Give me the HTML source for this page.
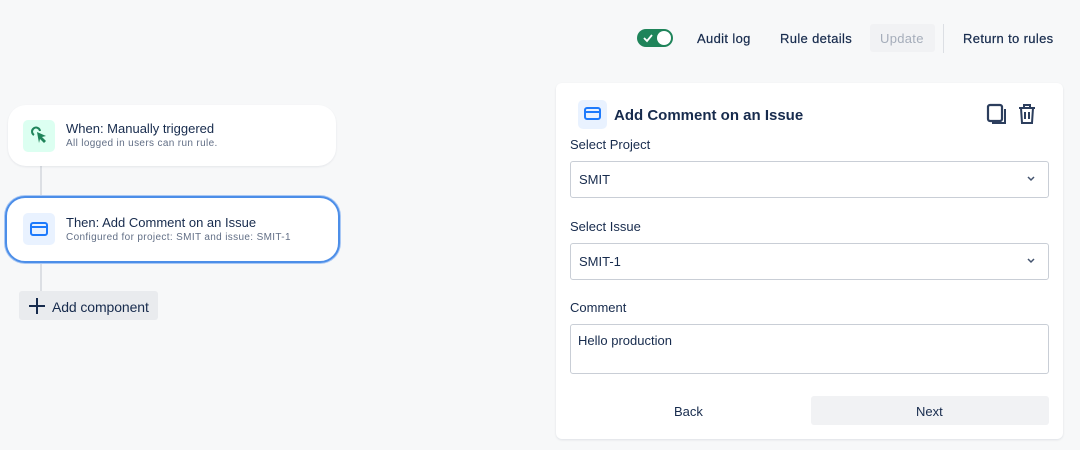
<!DOCTYPE html>
<html><head><style>
*{box-sizing:border-box;margin:0;padding:0}
body{width:1080px;height:450px;background:#f7f8f9;font-family:"Liberation Sans",sans-serif;color:#172b4d;position:relative;overflow:hidden}
.a{position:absolute}
.card{background:#fff;border-radius:18px;box-shadow:0 1px 2px rgba(9,30,66,.08)}
.t1{font-size:13px;color:#172b4d}
.nav{font-size:13px;color:#172b4d;letter-spacing:0.35px;-webkit-text-stroke:0.2px #172b4d}
.t2{font-size:10px;color:#626f86;letter-spacing:0.35px}
.lbl{font-size:13px;color:#172b4d}
.sel{background:#fff;border:1px solid #c9ced6;border-radius:3px;font-size:13px;padding-left:8px;display:flex;align-items:center}
</style></head><body>
<div class="a" style="left:637px;top:29px;width:36px;height:18px;border-radius:9px;background:#1f845a"></div>
<div class="a" style="left:657px;top:31px;width:14px;height:14px;border-radius:50%;background:#fff"></div>
<svg class="a" style="left:642px;top:32px" width="12" height="12" viewBox="0 0 12 12"><path d="M2 6l3 3 5-6" stroke="#fff" stroke-width="1.8" fill="none"/></svg>
<div class="a nav" style="left:697px;top:31px">Audit log</div>
<div class="a nav" style="left:780px;top:31px">Rule details</div>
<div class="a" style="left:870px;top:24px;width:65px;height:28px;background:#f1f2f4;border-radius:3px"></div>
<div class="a t1" style="left:880px;top:31px;color:#a5adba;letter-spacing:0.3px">Update</div>
<div class="a" style="left:943px;top:24px;width:1px;height:29px;background:#dcdfe4"></div>
<div class="a nav" style="left:963px;top:31px">Return to rules</div>
<div class="a" style="left:40px;top:165px;width:2px;height:130px;background:#dcdfe4"></div>
<div class="card a" style="left:8px;top:105px;width:328px;height:61px"></div>
<div class="a" style="left:23px;top:120px;width:32px;height:32px;border-radius:5px;background:#dcfff1"></div>
<svg class="a" style="left:28px;top:124px" width="22" height="22" viewBox="0 0 22 22"><path d="M6 11a4 4 0 1 1 6-4" stroke="#1f845a" stroke-width="2" fill="none"/><path d="M9 8l9 4-4 1 4 4-2 2-4-4-1 4z" fill="#1f845a"/></svg>
<div class="a t1" style="left:66px;top:121px">When: Manually triggered</div>
<div class="a t2" style="left:66px;top:138px">All logged in users can run rule.</div>
<div class="a" style="left:5px;top:196px;width:335px;height:67px;border-radius:20px;border:2px solid #4c8ee8;box-shadow:0 0 0 1px #a9c8f5;background:#fff"></div>
<div class="a" style="left:23px;top:213px;width:32px;height:32px;border-radius:5px;background:#e9f2ff"></div>
<svg class="a" style="left:29px;top:221px" width="20" height="16" viewBox="0 0 20 16"><rect x="2" y="2" width="16" height="12" rx="2" stroke="#1d7afc" stroke-width="2" fill="none"/><path d="M2 6h16" stroke="#1d7afc" stroke-width="2"/></svg>
<div class="a t1" style="left:66px;top:215px">Then: Add Comment on an Issue</div>
<div class="a t2" style="left:66px;top:232px">Configured for project: SMIT and issue: SMIT-1</div>
<div class="a" style="left:19px;top:291px;width:139px;height:29px;background:#e9ebee;border-radius:3px"></div>
<svg class="a" style="left:28px;top:297px" width="18" height="18" viewBox="0 0 18 18"><path d="M9 1v16M1 9h16" stroke="#172b4d" stroke-width="2"/></svg>
<div class="a" style="left:52px;top:299px;font-size:14px;letter-spacing:-0.1px">Add component</div>
<div class="a" style="left:556px;top:83px;width:507px;height:356px;background:#fff;border-radius:6px;box-shadow:0 1px 2px rgba(9,30,66,.1)"></div>
<div class="a" style="left:578px;top:100px;width:29px;height:29px;border-radius:5px;background:#e9f2ff"></div>
<svg class="a" style="left:583px;top:106px" width="20" height="16" viewBox="0 0 20 16"><rect x="2" y="2" width="15" height="11" rx="2" stroke="#1d7afc" stroke-width="2" fill="none"/><path d="M2 6h15" stroke="#1d7afc" stroke-width="2"/></svg>
<div class="a" style="left:614px;top:107px;font-size:15px;font-weight:bold">Add Comment on an Issue</div>
<svg class="a" style="left:985px;top:103px" width="22" height="22" viewBox="0 0 22 22"><rect x="3" y="2" width="14" height="16" rx="2" stroke="#2c3e5d" stroke-width="2.2" fill="none"/><path d="M20 6v14H7" stroke="#2c3e5d" stroke-width="2" fill="none"/></svg>
<svg class="a" style="left:1016px;top:103px" width="22" height="22" viewBox="0 0 22 22"><path d="M3 5h16M8 5V2h6v3M5 5l1 15h10l1-15M9 9v7M13 9v7" stroke="#2c3e5d" stroke-width="2" fill="none"/></svg>
<div class="a lbl" style="left:570px;top:137px">Select Project</div>
<div class="a sel" style="left:570px;top:161px;width:479px;height:37px">SMIT</div>
<div class="a lbl" style="left:570px;top:219px">Select Issue</div>
<div class="a sel" style="left:570px;top:243px;width:479px;height:37px">SMIT-1</div>
<svg class="a" style="left:1026px;top:175px" width="10" height="8"><path d="M2 2l3 3 3-3" stroke="#44546f" stroke-width="1.5" fill="none"/></svg>
<svg class="a" style="left:1026px;top:257px" width="10" height="8"><path d="M2 2l3 3 3-3" stroke="#44546f" stroke-width="1.5" fill="none"/></svg>
<div class="a lbl" style="left:570px;top:300px">Comment</div>
<div class="a sel" style="left:570px;top:324px;width:479px;height:50px;align-items:flex-start;padding-top:8px;padding-left:7px">Hello production</div>
<div class="a t1" style="left:674px;top:404px">Back</div>
<div class="a" style="left:811px;top:396px;width:238px;height:29px;background:#f1f2f4;border-radius:3px"></div>
<div class="a t1" style="left:916px;top:404px">Next</div>
</body></html>
